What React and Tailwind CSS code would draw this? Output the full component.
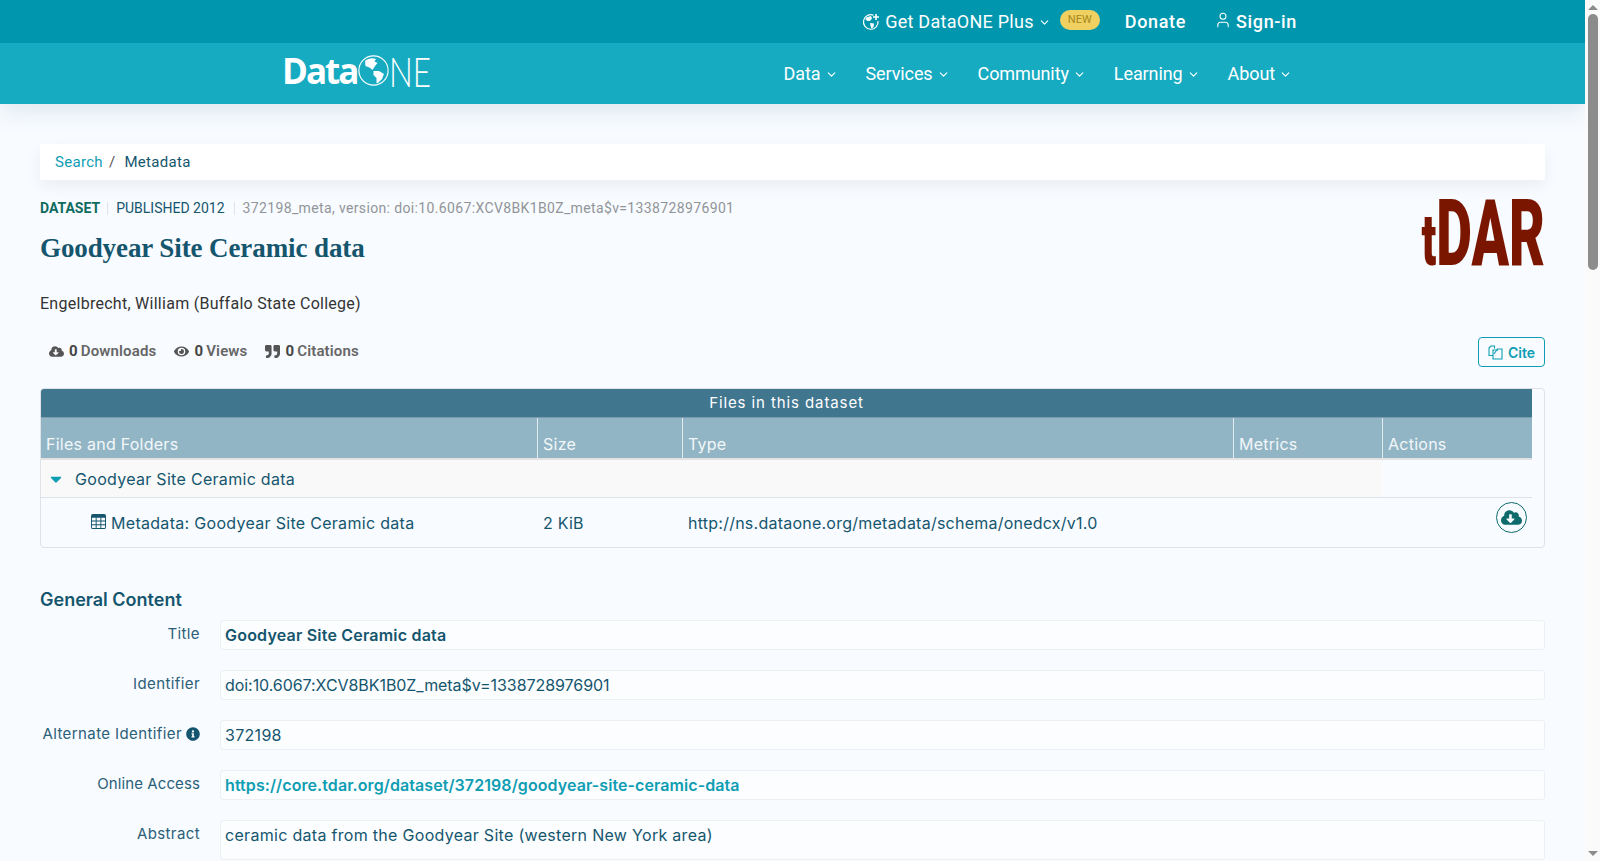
import { ChevronDown, User } from 'lucide-react'
import { FaCloudDownloadAlt, FaEye, FaQuoteRight, FaInfoCircle, FaCaretDown } from 'react-icons/fa'
import { BsTable } from 'react-icons/bs'

const NAV = ['Data', 'Services', 'Community', 'Learning', 'About']
const COLS = [
  { name: 'Files and Folders', width: 'w-[497px]' },
  { name: 'Size', width: 'w-[145px]' },
  { name: 'Type', width: 'w-[551px]' },
  { name: 'Metrics', width: 'w-[149px]' },
  { name: 'Actions', width: 'flex-1' }
]

function Logo() {
  return (
    <div className="flex items-center h-[40px] mb-[6px] text-white">
      <span className="font-['Open_Sans'] font-bold text-[35px] tracking-[-2px] leading-none">Data</span>
      <svg width="31" height="31" viewBox="0 0 31 31" className="ml-[1px]">
        <circle cx="15.5" cy="15.5" r="14.6" fill="none" stroke="white" strokeWidth="1.1" />
        <path d="M7 6 C10 3 15 2.5 18 4 L16.5 6.5 L19.5 8 L17 11 L14.5 15 L11.5 12.5 L7.5 11 Z" fill="white" />
        <path d="M15.5 16 L21 16 L26 19 L24 24 L20 28 L18.5 28 L18.5 23 L15.5 20 Z" fill="white" />
      </svg>
      <span className="font-['Lato'] font-light text-[42px] leading-none w-[38px] inline-block origin-left scale-x-[0.75]">NE</span>
    </div>
  )
}

function GlobePlus() {
  return (
    <svg width="18" height="18" viewBox="0 0 18 18" className="mr-[5px]">
      <path d="M11.5 2.2 A7.3 7.3 0 1 0 16 8" fill="none" stroke="white" strokeWidth="1.2" />
      <path d="M4 4.5 L9 3 L10 5.5 L8 8 L5.5 8 L3.5 6.5 Z M8 10 L12 10.5 L11.5 14 L9.5 15.5 L8.5 13 Z" fill="white" />
      <path d="M14 1 V7 M11 4 H17" stroke="white" strokeWidth="1.6" />
    </svg>
  )
}

function Header() {
  return (
    <header className="shadow-[0_6px_24px_rgba(20,90,110,0.12)]">
      <div className="h-[43px] bg-[#0097ae] flex items-center justify-end pr-[288px] text-white font-['Roboto',sans-serif]">
        <GlobePlus />
        <span className="text-[18px] tracking-[0.27px]">Get DataONE Plus</span>
        <ChevronDown size={13} strokeWidth={2} className="ml-[4px] mt-[2px]" />
        <span className="ml-[9px] mb-[3px] h-[20px] w-[40px] rounded-full bg-[#efd060] text-[#a5871a] text-[11px] flex items-center justify-center">NEW</span>
        <span className="ml-[25px] text-[18px] font-medium tracking-[0.65px]">Donate</span>
        <User size={18} strokeWidth={1.4} className="ml-[28px] mr-[4px] mb-[3px]" />
        <span className="text-[18px] font-medium tracking-[0.65px]">Sign-in</span>
      </div>
      <div className="h-[61px] bg-[#17abc2] flex items-center justify-between pl-[282px] pr-[293px] text-white font-['Roboto',sans-serif]">
        <Logo />
        <nav className="flex items-center gap-[28px]">
          {NAV.map((n) => (
            <span key={n} className="flex items-center gap-[4px] text-[18px] tracking-[-0.1px]">
              {n}
              <ChevronDown size={13} strokeWidth={2} className="mt-[2px]" />
            </span>
          ))}
        </nav>
      </div>
    </header>
  )
}

function Stat({ icon: Icon, count, label }) {
  return (
    <span className="flex items-center text-[15px] tracking-[0.15px] text-[#666]">
      <Icon size={15} className="text-[#555] mr-[5px]" />
      <b className="text-[#444] mr-[3px]">{count}</b>
      <span className="font-semibold">{label}</span>
    </span>
  )
}

function CiteIcon() {
  return (
    <svg width="15" height="15" viewBox="0 0 15 15" fill="none" stroke="currentColor" strokeWidth="1.1">
      <path d="M6.5 3.5 V1 H3 L1 3 V10.5 H5" />
      <path d="M5 5 H9.5 V4 H14 V14 H5 Z" />
      <path d="M9.5 4 L6 9" />
    </svg>
  )
}

function FilesTable() {
  return (
    <div className="mt-[21px] h-[160px] border border-[#dfe3e8] rounded-[4px] overflow-hidden font-['Inter',sans-serif] text-[#15566e]">
      <div className="mr-[12px]">
        <div className="h-[29px] bg-[#41768f] border-b border-[#7a9cad] flex items-center justify-center text-white text-[15px] tracking-[0.9px]">
          Files in this dataset
        </div>
        <div className="h-[40px] bg-[#92b5c5] border-b-2 border-[#e2e2e2] box-content flex text-[#f2f7f9] text-[16px] tracking-[0.25px]">
          {COLS.map((c, i) => (
            <div key={c.name} className={`${c.width} pl-[5px] pt-[14px] leading-[24px] ${i < 4 ? 'border-r border-[#e3eaee]' : ''}`}>
              {c.name}
            </div>
          ))}
        </div>
        <div className="h-[38px] flex border-b border-[#dfe3e8] text-[16px] tracking-[0.3px]">
          <div className="w-[1342px] bg-[#f9f9f9] flex items-center pl-[6px]">
            <FaCaretDown size={18} className="text-[#0f9db3] mr-[10px]" />
            Goodyear Site Ceramic data
          </div>
        </div>
        <div className="h-[49px] flex text-[16px] tracking-[0.24px]">
          <div className="w-[497px] flex items-center pl-[50px] tracking-[0.3px]">
            <BsTable size={15} className="mr-[5px] mb-[2px]" />
            Metadata: Goodyear Site Ceramic data
          </div>
          <div className="w-[145px] flex items-center pl-[5px]">2 KiB</div>
          <div className="w-[700px] flex items-center pl-[5px]">http://ns.dataone.org/metadata/schema/onedcx/v1.0</div>
          <div className="flex-1 flex justify-end pr-[5px] pt-[4px]">
            <span className="w-[31px] h-[31px] rounded-full border border-[#0f6b6b] flex items-center justify-center text-[#0f6b6b]">
              <FaCloudDownloadAlt size={21} />
            </span>
          </div>
        </div>
      </div>
    </div>
  )
}

function Field({ label, info, tall, children }) {
  return (
    <div className="flex mb-[20px]">
      <div className="w-[160px] flex justify-end items-start pt-[3px] text-[15px] tracking-[0.4px] text-[#2b6078]">
        {label}
        {info && <FaInfoCircle size={14} className="ml-[4px] mt-[4px] text-[#15566e]" />}
      </div>
      <div className={`ml-[20px] flex-1 ${tall ? 'h-[40px]' : 'h-[30px]'} border border-[#edf0f3] rounded-[3px] bg-[#fcfdff] pl-[4px] pt-[2px] text-[16px] tracking-[0.3px] text-[#15566e]`}>
        {children}
      </div>
    </div>
  )
}

export default function App() {
  return (
    <div className="h-screen flex overflow-hidden bg-[#f8fbff]">
      <div className="flex-1 min-w-0">
        <Header />
        <main className="px-[40px] pt-[40px] pr-[40px]">
          <div className="h-[36px] bg-white shadow-[0_6px_16px_rgba(0,0,0,0.06)] rounded-[2px] flex items-center pl-[15px] text-[15px] tracking-[0.3px] font-['Roboto',sans-serif]">
            <span className="text-[#0f9db3]">Search</span>
            <span className="text-[#555] ml-[6px] mr-[9px]">/</span>
            <span className="text-[#15566e]">Metadata</span>
          </div>

          <div className="flex justify-between">
            <div>
              <div className="mt-[20px] flex items-center h-[16px] text-[14px] font-['Roboto',sans-serif]">
                <b className="text-[#0f6b60] pr-[7px] border-r border-[#dfe4e8] leading-[13px]">DATASET</b>
                <span className="text-[#15566e] pl-[8px] pr-[9px] border-r border-[#dfe4e8] leading-[13px]">PUBLISHED 2012</span>
                <span className="text-[#919599] pl-[8px] tracking-[0.36px]">372198_meta, version: doi:10.6067:XCV8BK1B0Z_meta$v=1338728976901</span>
              </div>
              <h1 className="mt-[16px] font-['Liberation_Serif',serif] font-bold text-[27px] tracking-[-0.1px] leading-[32px] text-[#15566e]">Goodyear Site Ceramic data</h1>
              <p className="mt-[28px] text-[16px] leading-[24px] text-[#333] font-['Roboto',sans-serif] tracking-[0.27px]">Engelbrecht, William (Buffalo State College)</p>
            </div>
            <div className="mt-[20px] w-[126px] h-[68px] flex justify-end">
              <span className="shrink-0 origin-right scale-x-[0.6] font-['Roboto'] font-black text-[92px] leading-[68px] whitespace-nowrap text-[#7a1600]">
                <span className="text-[72px]">t</span>DAR
              </span>
            </div>
          </div>

          <div className="mt-[21px] flex items-center justify-between font-['Roboto',sans-serif]">
            <div className="flex gap-[18px] pl-[9px] pb-[2px]">
              <Stat icon={FaCloudDownloadAlt} count="0" label="Downloads" />
              <Stat icon={FaEye} count="0" label="Views" />
              <Stat icon={FaQuoteRight} count="0" label="Citations" />
            </div>
            <button className="h-[30px] w-[67px] border border-[#0f9db3] rounded-[4px] flex items-center justify-center gap-[5px] text-[#0f9db3] text-[14px] font-semibold font-['Inter',sans-serif]">
              <CiteIcon />
              Cite
            </button>
          </div>

          <FilesTable />

          <h2 className="mt-[40px] mb-[8px] text-[18px] leading-[24px] font-semibold text-[#15566e] font-['Inter',sans-serif]">General Content</h2>
          <div className="font-['Inter',sans-serif]">
            <Field label="Title"><b className="font-semibold tracking-[0.2px]">Goodyear Site Ceramic data</b></Field>
            <Field label="Identifier"><span className="tracking-[-0.06px]">doi:10.6067:XCV8BK1B0Z_meta$v=1338728976901</span></Field>
            <Field label={<span>Alternate Identifier</span>} info>372198</Field>
            <Field label={<span className="tracking-[0.1px]">Online Access</span>}><b className="font-semibold tracking-[0.08px] text-[#0f9db3]">https://core.tdar.org/dataset/372198/goodyear-site-ceramic-data</b></Field>
            <Field label="Abstract" tall>ceramic data from the Goodyear Site (western New York area)</Field>
          </div>
        </main>
      </div>

      <aside className="w-[15px] bg-[#fafafa] flex flex-col items-center shrink-0">
        <span className="mt-[5px] w-0 h-0 border-x-[5px] border-x-transparent border-b-[5px] border-b-[#8c8c8c]" />
        <span className="mt-[4px] w-[10px] h-[256px] rounded-full bg-[#8c8c8c]" />
        <span className="mt-auto mb-[5px] w-0 h-0 border-x-[5px] border-x-transparent border-t-[5px] border-t-[#8c8c8c]" />
      </aside>
    </div>
  )
}
